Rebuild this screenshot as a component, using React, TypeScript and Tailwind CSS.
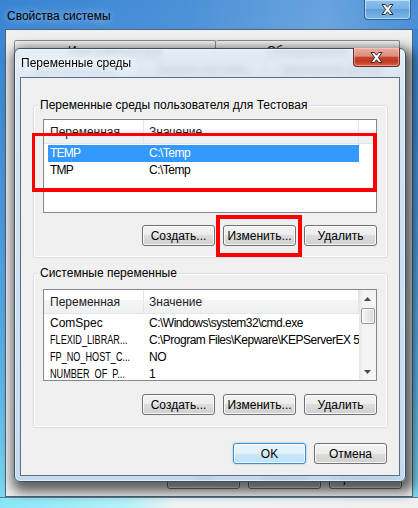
import React from "react";

function CloseX() {
  return (
    <svg width="13" height="11" viewBox="0 0 13 11">
      <polygon
        points="1,0.5 4.3,0.5 6.5,3.2 8.7,0.5 12,0.5 8.4,5.5 12,10.5 8.7,10.5 6.5,7.8 4.3,10.5 1,10.5 4.6,5.5"
        fill="#ffffff"
        stroke="#2c2c2c"
        strokeWidth="1"
        strokeLinejoin="round"
      />
    </svg>
  );
}

function Btn({ label, primary = false, tall = false }: { label: string; primary?: boolean; tall?: boolean }) {
  const base = tall ? "h-[23px]" : "h-[21px]";
  return (
    <button
      type="button"
      className={
        primary
          ? `${base} flex w-[73px] items-center justify-center rounded-[3px] border border-[#3c8ed2] bg-[linear-gradient(#e9f5fc_0%,#dff1fb_50%,#cbe8f8_50%,#bfe1f5_100%)] leading-none text-black shadow-[inset_0_0_0_1px_rgba(255,255,255,0.75),0_0_2px_rgba(70,160,230,0.7)]`
          : `${base} flex w-[73px] items-center justify-center rounded-[3px] border border-[#707070] bg-[linear-gradient(#f3f3f3_0%,#ececec_50%,#dddddd_50%,#d0d0d0_100%)] leading-none text-black shadow-[inset_0_0_0_1px_rgba(255,255,255,0.8)]`
      }
    >
      {label}
    </button>
  );
}

type Row = [string, string];

function nameClass(name: string) {
  if (name.endsWith("...")) return "inline-block origin-left scale-x-[0.76]";
  if (name === name.toUpperCase()) return "inline-block tracking-[-0.8px]";
  return "inline-block";
}

function ListView({
  rows,
  selected = -1,
  scroll = false,
  heightClass,
}: {
  rows: Row[];
  selected?: number;
  scroll?: boolean;
  heightClass: string;
}) {
  return (
    <div className={`flex w-[334px] ${heightClass} overflow-hidden border border-[#828790] bg-white`}>
      <div className="flex min-w-0 flex-1 flex-col">
        <div className="flex h-[24px] shrink-0 border-b border-[#e2e5e9] bg-[linear-gradient(#ffffff_0%,#ffffff_45%,#f3f4f6_45%,#eef0f2_100%)] text-[#1e1e1e]">
          <div className="flex w-[100px] items-center border-r border-[#e2e5e9] pl-[6px]">Переменная</div>
          <div className="flex w-[215px] items-center border-r border-[#e2e5e9] pl-[5px]">Значение</div>
          <div className="flex-1" />
        </div>
        <div className="flex flex-col pt-[1px]">
          {rows.map((r, i) => (
            <div
              key={i}
              className={
                i === selected
                  ? "ml-[4px] flex h-[17px] w-[311px] items-center bg-[#3399ff] leading-[17px] text-white"
                  : "ml-[4px] flex h-[17px] w-[311px] items-center leading-[17px] text-black"
              }
            >
              <span className="w-[101px] shrink-0 overflow-hidden whitespace-nowrap pl-[2px]">
                <span className={nameClass(r[0])}>{r[0]}</span>
              </span>
              <span className="min-w-0 flex-1 overflow-hidden whitespace-nowrap tracking-[-0.5px]">{r[1]}</span>
            </div>
          ))}
        </div>
      </div>
      {scroll && (
        <div className="flex w-[17px] shrink-0 flex-col bg-[linear-gradient(90deg,#e6e6e6_0%,#f3f3f3_25%,#f4f4f4_100%)]">
          <div className="flex h-[17px] items-center justify-center">
            <svg width="7" height="4" viewBox="0 0 7 4">
              <polygon points="3.5,0 7,4 0,4" fill="#4a4a4a" />
            </svg>
          </div>
          <div className="ml-[2px] mr-[1px] mt-[1px] h-[16px] rounded-[2px] border border-[#979797] bg-[linear-gradient(90deg,#f6f6f6_0%,#e9e9e9_50%,#d9d9d9_100%)] shadow-[inset_0_0_0_1px_rgba(255,255,255,0.8)]" />
          <div className="flex-1" />
          <div className="flex h-[17px] items-center justify-center">
            <svg width="7" height="4" viewBox="0 0 7 4">
              <polygon points="0,0 7,0 3.5,4" fill="#4a4a4a" />
            </svg>
          </div>
        </div>
      )}
    </div>
  );
}

function Group({
  title,
  className,
  children,
}: {
  title: string;
  className: string;
  children: React.ReactNode;
}) {
  return (
    <div
      className={`relative flex flex-col rounded-[3px] border border-[#d5dfe5] shadow-[inset_0_0_0_1px_#ffffff] pl-[9px] pr-[10px] ${className}`}
    >
      <span className="absolute left-[4px] top-[-9px] bg-[#f0f0f0] px-[2px] leading-[16px] text-black">{title}</span>
      {children}
    </div>
  );
}

export default function App() {
  const userRows: Row[] = [
    ["TEMP", "C:\\Temp"],
    ["TMP", "C:\\Temp"],
  ];
  const sysRows: Row[] = [
    ["ComSpec", "C:\\Windows\\system32\\cmd.exe"],
    ["FLEXID_LIBRAR...", "C:\\Program Files\\Kepware\\KEPServerEX 5\\"],
    ["FP_NO_HOST_C...", "NO"],
    ["NUMBER_OF_P...", "1"],
  ];

  return (
    <div className="relative flex h-[508px] w-[418px] flex-col overflow-hidden bg-[linear-gradient(180deg,#3784d3_0%,#4a96dc_40%,#5cb3e6_75%,#7ddcf3_100%)] [font-family:Liberation_Sans,Arial,sans-serif] text-[12px] text-black">
      {/* Outer window title bar */}
      <div className="flex h-[29px] shrink-0 items-start bg-[linear-gradient(90deg,rgba(255,255,255,0)_0%,rgba(255,255,255,0.1)_45%,rgba(255,255,255,0.25)_78%,rgba(255,255,255,0.08)_100%)]">
        <span className="ml-[7px] mt-[8px] leading-[16px] [text-shadow:0_0_8px_rgba(255,255,255,0.7)]">Свойства системы</span>
        <div className="ml-auto mr-[7px] flex h-[20px] w-[47px] items-center justify-center rounded-b-[4px] border border-t-0 border-[#2f5f90] bg-[linear-gradient(#8fc3ee_0%,#74b0e4_50%,#5f9fdb_50%,#7db8e8_100%)] shadow-[inset_0_0_0_1px_rgba(255,255,255,0.45)]">
          <CloseX />
        </div>
      </div>

      {/* Outer window client */}
      <div className="mx-[5px] flex h-[468px] shrink-0 flex-col border border-[#50657a] bg-[#f0f0f0]">
        <div className="ml-[8px] mr-[12px] mt-[10px] flex flex-1 flex-col">
          <div className="flex h-[18px] shrink-0">
            <div className="flex w-[202px] items-start justify-center rounded-t-[2px] border border-b-0 border-[#898c95] bg-[linear-gradient(#f6f6f6,#e3e3e3)] pt-[3px] leading-[14px]">
              Имя компьютера
            </div>
            <div className="flex flex-1 items-start justify-center rounded-t-[2px] border border-b-0 border-l-0 border-[#898c95] bg-[linear-gradient(#f6f6f6,#e3e3e3)] pt-[3px] leading-[14px]">
              Оборудование
            </div>
          </div>
          <div className="flex h-[20px] shrink-0">
            <div className="flex w-[126px] items-center justify-center border border-b-0 border-[#898c95] bg-white">Дополнительно</div>
            <div className="flex w-[125px] items-center justify-center border border-b-0 border-l-0 border-[#898c95] bg-[linear-gradient(#f6f6f6,#e3e3e3)]">
              Защита системы
            </div>
            <div className="flex flex-1 items-center justify-center border border-b-0 border-l-0 border-[#898c95] bg-[linear-gradient(#f6f6f6,#e3e3e3)]">
              Удаленный доступ
            </div>
          </div>
          <div className="flex-1 border border-[#898c95] bg-white" />
        </div>
        <div className="mb-[7px] mr-[10px] mt-[8px] flex justify-end gap-[8px]">
          <Btn label="ОК" tall />
          <Btn label="Отмена" tall />
          <Btn label="Применить" tall />
        </div>
      </div>

      <div className="flex-1 border-t border-[#5a7d92] bg-[linear-gradient(90deg,#86e6f7_0%,#b5f1fa_30%,#eef4f6_42%,#f0f0f0_100%)]" />

      {/* Inner dialog: Переменные среды */}
      <div className="absolute left-[14px] top-[48px] flex h-[434px] w-[392px] flex-col rounded-[6px] border border-[#3b4f66] bg-[linear-gradient(180deg,rgba(228,237,247,0.86)_0%,rgba(210,226,243,0.86)_12%,rgba(192,214,238,0.9)_100%)] shadow-[3px_5px_12px_5px_rgba(0,0,0,0.6),inset_0_0_0_1px_rgba(255,255,255,0.55)] backdrop-blur-[3px]">
        <div className="relative flex h-[28px] shrink-0 items-center pl-[6px]">
          <span className="leading-[16px] [text-shadow:0_0_6px_#ffffff,0_0_10px_#ffffff]">Переменные среды</span>
          <div className="absolute right-[5px] top-[-1px] flex h-[19px] w-[47px] items-center justify-center rounded-b-[4px] border border-t-0 border-[#6e2a20] bg-[linear-gradient(#eaaea2_0%,#dc8c7d_45%,#c8432d_52%,#bf3a22_75%,#d9674f_100%)] shadow-[inset_0_0_0_1px_rgba(255,220,210,0.45)]">
            <CloseX />
          </div>
        </div>

        <div className="mx-[5px] mb-[5px] flex flex-1 flex-col border border-[#5b6e82] bg-[#f0f0f0] pl-[12px] pr-[11px]">
          <Group title="Переменные среды пользователя для Тестовая" className="mt-[27px] pb-[11px] pt-[13px]">
            <ListView rows={userRows} selected={0} heightClass="h-[94px]" />
            <div className="mt-[12px] flex justify-end gap-[8px]">
              <Btn label="Создать..." />
              <Btn label="Изменить..." />
              <Btn label="Удалить" />
            </div>
          </Group>

          <Group title="Системные переменные" className="mt-[15px] pb-[12px] pt-[15px]">
            <ListView rows={sysRows} scroll heightClass="h-[92px]" />
            <div className="mt-[13px] flex justify-end gap-[8px]">
              <Btn label="Создать..." />
              <Btn label="Изменить..." />
              <Btn label="Удалить" />
            </div>
          </Group>

          <div className="mr-[1px] mt-[15px] flex justify-end gap-[8px]">
            <Btn label="OK" primary />
            <Btn label="Отмена" />
          </div>
        </div>
      </div>

      {/* Red highlight frames drawn over the screenshot */}
      <div className="absolute left-[32px] top-[133px] h-[59px] w-[345px] border-b-4 border-l-[3px] border-r-4 border-t-[3px] border-[#ff0000]" />
      <div className="absolute left-[216px] top-[215px] h-[42px] w-[86px] border-4 border-[#ff0000]" />
    </div>
  );
}
